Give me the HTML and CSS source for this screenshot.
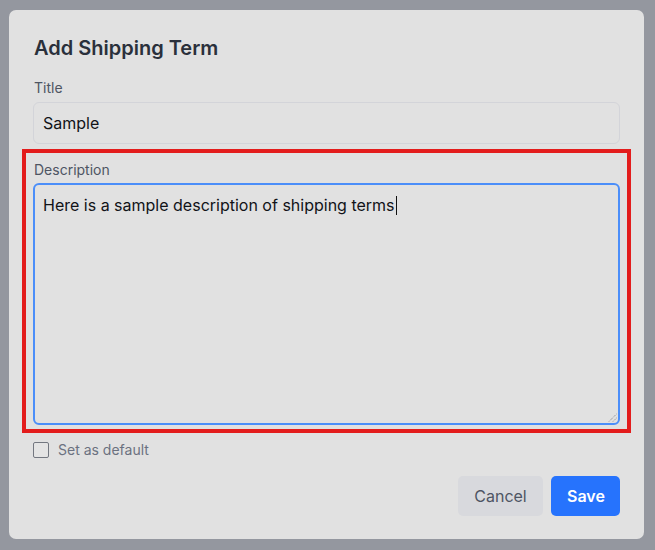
FILE: index.html
```html
<!DOCTYPE html>
<html lang="en">
<head>
<meta charset="utf-8">
<title>Add Shipping Term</title>
<link rel="stylesheet" href="styles.css">
</head>
<body>
<div class="modal">
  <h2 class="modal-title">Add Shipping Term</h2>
  <div class="field">
    <label class="field-label">Title</label>
    <div class="input">Sample</div>
  </div>
  <div class="field highlight">
    <label class="field-label">Description</label>
    <div class="textarea">
      <span class="ta-text">Here is a sample description of shipping terms<span class="caret"></span></span>
      <svg class="grip" width="9" height="9" viewBox="0 0 9 9" aria-hidden="true">
        <line x1="1" y1="8.5" x2="8.5" y2="1" stroke="#7d7f85" stroke-width="1" stroke-dasharray="1 1"/>
        <line x1="5" y1="8.5" x2="8.5" y2="5" stroke="#7d7f85" stroke-width="1" stroke-dasharray="1 1"/>
      </svg>
    </div>
  </div>
  <div class="check-row">
    <span class="checkbox"></span>
    <span class="check-label">Set as default</span>
  </div>
  <div class="actions">
    <button class="btn btn-cancel">Cancel</button>
    <button class="btn btn-save">Save</button>
  </div>
</div>
</body>
</html>
```

FILE: styles.css
```css
* { box-sizing: border-box; }
html, body { margin: 0; padding: 0; }
body {
  width: 655px;
  height: 550px;
  background: #94979f;
  font-family: Inter, "Noto Sans", sans-serif;
  padding: 10px 0 0 9px;
}
.modal {
  width: 635px;
  height: 529px;
  background: #e1e1e1;
  border-radius: 7px;
  padding: 24px 24px 0 24px;
  display: flex;
  flex-direction: column;
}
.modal-title {
  margin: 0 0 16px 1px;
  font-size: 20px;
  line-height: 28px;
  font-weight: 600;
  color: #2a303b;
}
.field {
  display: flex;
  flex-direction: column;
}
.field-label {
  font-size: 14px;
  line-height: 20px;
  color: #4e5563;
  margin: 0 0 4px 1px;
}
.input {
  height: 42px;
  border: 1px solid #d3d4d9;
  border-radius: 6px;
  padding: 0 9px;
  font-size: 16px;
  line-height: 40px;
  color: #111318;
}
.highlight {
  margin: 5px -11px 0 -11px;
  border: 4px solid #e31c1c;
  padding: 7px 7px 4px 7px;
}
.highlight .field-label { margin-bottom: 3px; }
.textarea {
  position: relative;
  height: 242px;
  border: 2px solid #4b8ef9;
  border-radius: 6px;
  padding: 8px 8px;
  font-size: 16px;
  line-height: 24px;
  color: #111318;
}
.caret {
  display: inline-block;
  width: 1px;
  height: 19px;
  background: #111;
  vertical-align: -4px;
  margin-left: 1px;
}
.grip {
  position: absolute;
  right: 1px;
  bottom: 1px;
}
.check-row {
  display: flex;
  align-items: center;
  gap: 9px;
  margin-top: 7px;
  height: 20px;
}
.checkbox {
  width: 16px;
  height: 16px;
  border: 1px solid #737780;
  border-radius: 2px;
  background: #e4e4e4;
}
.check-label {
  font-size: 14px;
  line-height: 20px;
  color: #6b7180;
}
.actions {
  display: flex;
  justify-content: flex-end;
  gap: 8px;
  margin-top: 16px;
}
.btn {
  height: 40px;
  border: none;
  border-radius: 5px;
  font-family: inherit;
  font-size: 16px;
  padding: 0 16px;
  cursor: pointer;
}
.btn-cancel {
  width: 85px;
  background: #d8d9dd;
  color: #4e5563;
}
.btn-save {
  width: 69px;
  background: #2673fd;
  color: #ffffff;
  font-weight: 600;
}
```
